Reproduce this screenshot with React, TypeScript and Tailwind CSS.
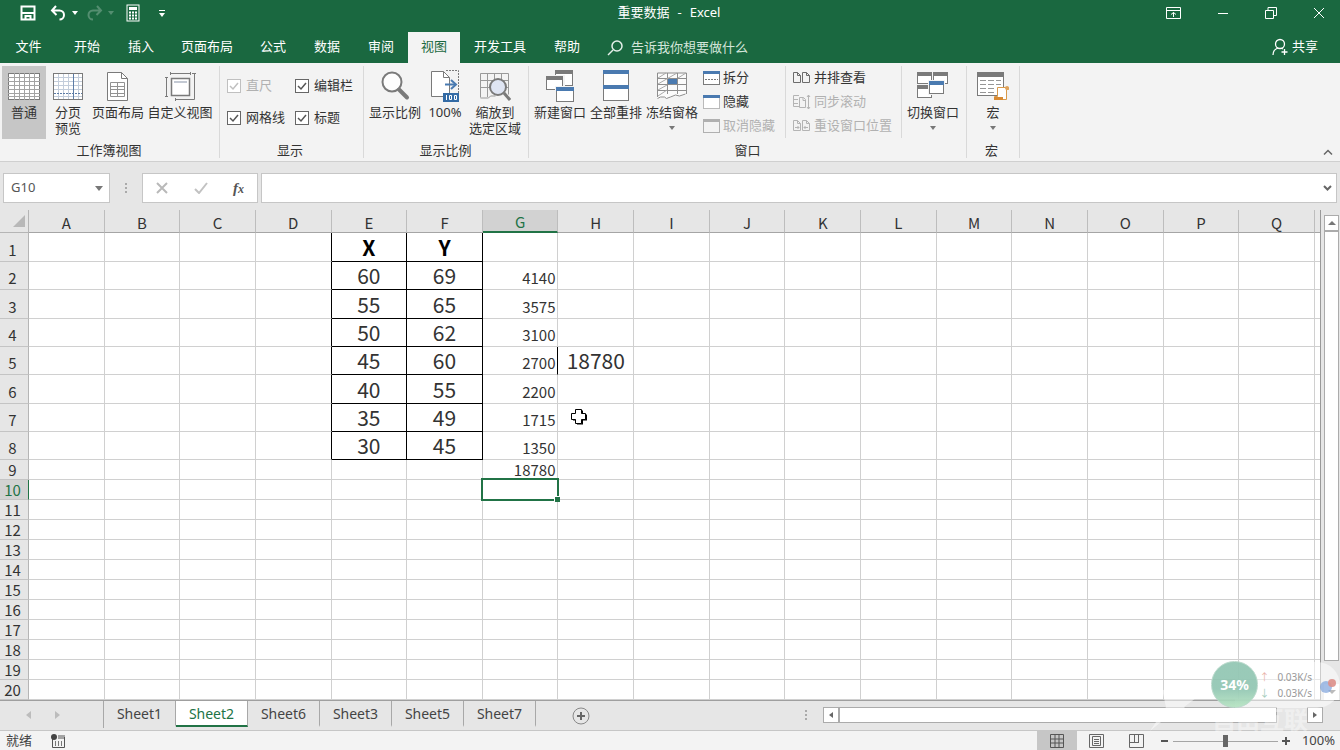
import React from "react";
import clsx from "clsx";

type Cell = { text: string; className: string };

const columns = "ABCDEFGHIJKLMNOPQ".split("");

const rowHeights = [
  "h-[29px]", "h-[28px]", "h-[29px]", "h-[28px]", "h-[28px]",
  "h-[29px]", "h-[28px]", "h-[28px]",
];

const xs = ["X", "60", "55", "50", "45", "40", "35", "30"];
const ys = ["Y", "69", "65", "62", "60", "55", "49", "45"];
const products = ["", "4140", "3575", "3100", "2700", "2200", "1715", "1350", "18780"];

const ribbonTabs = [
  { label: "开始", width: "w-[54px]" },
  { label: "插入", width: "w-[54px]" },
  { label: "页面布局", width: "w-[78px]" },
  { label: "公式", width: "w-[54px]" },
  { label: "数据", width: "w-[54px]" },
  { label: "审阅", width: "w-[54px]" },
  { label: "视图", width: "w-[52px]", active: true },
  { label: "开发工具", width: "w-[80px]" },
  { label: "帮助", width: "w-[54px]" },
];

const sheets = ["Sheet1", "Sheet2", "Sheet6", "Sheet3", "Sheet5", "Sheet7"];

const BLUE = "#4a7ab0";
const GRAY = "#7a7a7a";

/* ---------- Icons ---------- */

const Svg = ({ w, h, children }: { w: number; h: number; children: React.ReactNode }) => (
  <svg width={w} height={h} viewBox={`0 0 ${w} ${h}`} fill="none" className="shrink-0" aria-hidden="true">
    {children}
  </svg>
);

const NormalIcon = () => (
  <Svg w={32} h={32}>
    <rect x="0.5" y="3.5" width="31" height="26" fill="#fff" stroke={GRAY} />
    <path d="M6.5 3v27M11.5 3v27M16.5 3v27M21.5 3v27M26.5 3v27M0 7.5h32M0 11.5h32M0 15.5h32M0 19.5h32M0 23.5h32M0 26.5h32" stroke="#a3a3a3" />
  </Svg>
);

const PageBreakIcon = () => (
  <Svg w={30} h={32}>
    <rect x="0.5" y="3.5" width="29" height="26" fill="#fff" stroke={GRAY} />
    <path d="M5.5 4v25M10.5 4v25M15.5 4v25M25.5 4v25M1 7.5h28M1 11.5h28M1 15.5h28M1 19.5h28M1 26.5h28" stroke="#c3cddb" />
    <path d="M20.5 4v25" stroke="#5c7ca6" />
    <path d="M1 23.5h28" stroke="#5c7ca6" strokeDasharray="2 1" />
  </Svg>
);

const PageLayoutIcon = () => (
  <Svg w={24} h={32}>
    <path d="M1.5 2.5h14l6 6v22h-20z" fill="#fff" stroke={GRAY} />
    <path d="M15.5 2.5v6h6" stroke={GRAY} />
    <path d="M4.500 12.500h14v14h-14zM4 16.500h15M4 19.500h15M4 23.500h15M11.500 12v15" stroke="#929292" />
  </Svg>
);

const CustomViewIcon = () => (
  <Svg w={32} h={32}>
    <path d="M2.500 8v18M1 7.500h3M1 26.500h3M7 3.500h19M6.500 2v3M26.500 2v3" stroke={GRAY} />
    <path d="M28 3.500h2.500v26h-19M11.500 28v3M29 3.500h3" stroke={GRAY} />
    <rect x="7.500" y="8.500" width="18" height="17" fill="#fff" stroke={GRAY} strokeWidth="1.500" />
    <path d="M10 12h13" stroke="#c3c9d3" strokeWidth="2" />
  </Svg>
);

const MagnifierIcon = () => (
  <Svg w={32} h={32}>
    <circle cx="13" cy="12" r="9.500" fill="#fdfdfd" stroke={GRAY} strokeWidth="2" />
    <path d="M20 19.500l8 8" stroke={GRAY} strokeWidth="4" strokeLinecap="round" />
  </Svg>
);

const HundredIcon = () => (
  <Svg w={30} h={34}>
    <path d="M1.500 2.500h12l6 6v19h-18z" fill="#fff" stroke={GRAY} />
    <path d="M13.500 2.500v6h6" stroke={GRAY} />
    <path d="M16 1.500h12.500V25" stroke={GRAY} strokeDasharray="2 1" />
    <path d="M15 15.500h10" stroke={BLUE} strokeWidth="2" />
    <path d="M21 11l5 4.500-5 4.500" stroke={BLUE} strokeWidth="2" />
    <rect x="13" y="24" width="16" height="9" fill="#336ba5" />
    <path d="M16.500 26v5M19.500 26.500h2v4h-2zM24.500 26.500h2v4h-2z" stroke="#fff" />
  </Svg>
);

const ZoomSelectionIcon = () => (
  <Svg w={32} h={32}>
    <path d="M1.500 27.500v-24h28v21M1 10.500h28M1 17.500h28M8.500 3v24M15.500 3v6M22.500 3v6M1.500 28h8l2 -2h5" stroke="#999" />
    <circle cx="19" cy="17" r="8" fill="#dfe5f3" stroke={GRAY} strokeWidth="2" />
    <path d="M25 23l6 7" stroke={GRAY} strokeWidth="3" />
  </Svg>
);

const Win = ({ x, y, w, h, c }: { x: number; y: number; w: number; h: number; c: string }) => (
  <g>
    <rect x={x + 0.5} y={y + 0.5} width={w - 1} height={h - 1} fill="#fff" stroke={GRAY} />
    <rect x={x} y={y} width={w} height={4} fill={c} />
  </g>
);

const NewWindowIcon = () => (
  <Svg w={30} h={34}>
    <Win x={10} y={1} w={18} h={16} c={GRAY} />
    <path d="M0 6h20v16H0z" fill="#f3f3f3" />
    <Win x={1} y={7} w={17} h={14} c={GRAY} />
    <path d="M10 17h20v16H10z" fill="#f3f3f3" />
    <Win x={11} y={18} w={18} h={15} c={BLUE} />
  </Svg>
);

const ArrangeAllIcon = () => (
  <Svg w={26} h={32}>
    <Win x={0} y={0} w={26} h={16} c={BLUE} />
    <Win x={0} y={15} w={26} h={16} c={BLUE} />
  </Svg>
);

const FreezeIcon = () => (
  <Svg w={30} h={32}>
    <path d="M.500 3.500h29v21l-6 2-4-1-5 2-4 1.500-2-1.500H4L.500 29z" fill="#fbfbfb" />
    <path d="M0.500 27v-24h29v21M0 8.500h29M0 14.500h29M0 20.500h29M10.500 3v21M20.500 3v21M0.500 28.500l3-1.500h4l2 1.500 4-1.500 5-2 4 1 6-2" stroke="#8d8d8d" />
    <path d="M1 8l8-5M1 14l19-11M1 20l9-5M1 26l9-6M21 8l8-5" stroke="#a9a9a9" />
    <rect x="11" y="9" width="9" height="5" fill={BLUE} />
  </Svg>
);

const SwitchWindowIcon = () => (
  <Svg w={32} h={32}>
    <Win x={0} y={2} w={15} h={12} c={GRAY} />
    <Win x={16} y={2} w={15} h={12} c={GRAY} />
    <Win x={0} y={15} w={15} h={13} c={GRAY} />
    <path d="M11 10h17v15H11z" fill="#f3f3f3" />
    <Win x={12} y={11} w={15} h={13} c={BLUE} />
  </Svg>
);

const MacroIcon = () => (
  <Svg w={34} h={32}>
    <rect x="1.500" y="2.500" width="26" height="23" fill="#fff" stroke={GRAY} />
    <path d="M1 2h27v5H1z" fill={GRAY} />
    <path d="M4 10.500h6M12 10.500h6M20 10.500h5M4 14.500h6M12 14.500h6M20 14.500h5M4 18.500h6M12 18.500h6M4 22.500h6M12 22.500h6" stroke="#969696" />
    <path d="M21.500 17.500h11v2h-2v10h-12v-3h3z" fill="#fff" stroke="#d99a4b" />
    <path d="M18 27h9v3h-9z" fill="#d88a33" />
    <circle cx="31" cy="18" r="2" fill="#e0a35c" />
  </Svg>
);

const SmallWindowIcon = ({ kind }: { kind: "split" | "hide" | "unhide" }) => (
  <Svg w={17} h={16}>
    <rect x="0.500" y="1.500" width="16" height="13" fill={kind === "unhide" ? "#f3f3f3" : "#fff"} stroke={kind === "unhide" ? "#b0b0b0" : GRAY} strokeDasharray={kind === "hide" ? "1 1" : undefined} />
    <path d="M0 1h17v3H0z" fill={kind === "unhide" ? "#b0b0b0" : BLUE} />
    {kind === "split" && <path d="M2 9.500h13" stroke={GRAY} strokeDasharray="2 1" />}
  </Svg>
);

const SideBySideIcon = ({ kind }: { kind: "view" | "sync" | "reset" }) => {
  const c = kind === "view" ? "#6c6c6c" : "#b4b4b4";
  return (
    <Svg w={18} h={16}>
      {kind === "sync" ? (
        <path d="M6 1.500H.500v11H6M1 5.500h4M1 9.500h4M6.500 3.500h4l2 2v8h-6zM10 3.500v3h3M15.500 1v14M14 3l1.500-2 1.500 2M14 13l1.500 2 1.500-2" stroke={c} />
      ) : (
        <path d="M.500 2.500h4l3 3v7h-7zM4.500 2.500v3h3M9.500 2.500h4l3 3v7h-7zM13.500 2.500v3h3" stroke={c} />
      )}
      {kind === "reset" && <path d="M2 9.500h4M4.500 8l1.500 1.500L4.500 11M11 9.500h4M12.500 8L11 9.500l1.500 1.500" stroke={c} />}
    </Svg>
  );
};

const Caret = ({ className = "border-t-[#777]" }: { className?: string }) => (
  <span className={clsx("block h-0 w-0 border-x-[3px] border-t-[4px] border-x-transparent", className)} />
);

/* ---------- Ribbon pieces ---------- */

type BigButtonProps = {
  icon: React.ReactNode;
  lines: string[];
  width: string;
  active?: boolean;
  menu?: boolean;
};

const BigButton = ({ icon, lines, width, active, menu }: BigButtonProps) => (
  <button className={clsx("flex h-[73px] shrink-0 flex-col items-center pt-[2px] whitespace-nowrap", width, active && "bg-[#c6c6c6]")}>
    <span className="flex h-[36px] items-center justify-center">{icon}</span>
    {lines.map((line) => (
      <span key={line} className="leading-4">{line}</span>
    ))}
    {menu && <span className="flex h-4 items-center"><Caret /></span>}
  </button>
);

const Group = ({ title, className, children }: { title: string; className: string; children: React.ReactNode }) => (
  <section aria-label={title} className={clsx("flex shrink-0 flex-col border-r border-[#d9d9d9]", className)}>
    <div className="flex h-[77px]">{children}</div>
    <div className="pr-[3px] text-center leading-4">{title}</div>
  </section>
);

const Check = ({ label, disabled }: { label: string; disabled?: boolean }) => (
  <label className={clsx("flex h-8 items-center gap-[5px] whitespace-nowrap", disabled && "text-[#b1b1b1]")}>
    <span className="grid">
      <input
        type="checkbox"
        defaultChecked
        disabled={disabled}
        className={clsx("col-start-1 row-start-1 h-[14px] w-[14px] appearance-none border bg-white", disabled ? "border-[#c0c0c0]" : "border-[#666]")}
      />
      <svg viewBox="0 0 14 14" fill="none" className="pointer-events-none col-start-1 row-start-1 h-[14px] w-[14px]">
        <path d="M3 7l3 3 5-6" stroke={disabled ? "#c0c0c0" : "#555"} strokeWidth="1.5" />
      </svg>
    </span>
    {label}
  </label>
);

const ListButton = ({ icon, label, disabled }: { icon: React.ReactNode; label: string; disabled?: boolean }) => (
  <button disabled={disabled} className={clsx("flex h-6 items-center gap-[3px] whitespace-nowrap", disabled && "text-[#b1b1b1]")}>
    {icon}
    {label}
  </button>
);

const TitleBar = () => (
  <header className="bg-[#1a6840] text-[13px] text-white">
    <div className="grid h-[26px] grid-cols-3 items-center">
      <div className="flex items-center pl-5">
        <button aria-label="保存">
          <Svg w={16} h={16}>
            <path d="M1.500 1.500h13v13h-13z" stroke="#fff" strokeWidth="2" />
            <path d="M2 8h12" stroke="#fff" strokeWidth="2" />
            <path d="M5.500 14v-3h5v3" stroke="#fff" strokeWidth="2" />
          </Svg>
        </button>
        <button aria-label="撤消" className="ml-[14px] flex items-center gap-[5px]">
          <Svg w={17} h={16}>
            <path d="M6 1L2 5.500 6.500 10M2.500 5.500h7a4.500 4.500 0 0 1 0 9" stroke="#fff" strokeWidth="2" />
          </Svg>
          <Caret className="border-t-white" />
        </button>
        <button aria-label="恢复" className="ml-2 flex items-center gap-[5px] opacity-25">
          <Svg w={17} h={16}>
            <path d="M11 1l4 4.500-4.500 4.500M15 5.500H7a4.500 4.500 0 0 0 0 9" stroke="#fff" strokeWidth="2" />
          </Svg>
          <Caret className="border-t-white" />
        </button>
        <button aria-label="计算器" className="ml-[12px]">
          <Svg w={14} h={18}>
            <rect x="1" y="1" width="12" height="16" stroke="#fff" />
            <path d="M3 4.500h8" stroke="#fff" strokeWidth="3" />
            <path d="M3 8.500h8M3 11.500h8M3 14.500h8" stroke="#fff" strokeWidth="2" strokeDasharray="2 1" />
          </Svg>
        </button>
        <button aria-label="自定义快速访问工具栏" className="ml-[19px] flex flex-col items-center gap-[2px]">
          <span className="block h-px w-[6px] bg-white" />
          <Caret className="border-t-white" />
        </button>
      </div>
      <h1 className="flex justify-center gap-2 pr-[2px]">
        <span>重要数据</span>
        <span>-</span>
        <span>Excel</span>
      </h1>
      <div className="flex items-center justify-end gap-[36px] pr-[15px]">
        <button aria-label="功能区显示选项">
          <Svg w={15} h={12}>
            <path d="M.500.500h14v11H.500zM0 3.500h15M7.500 10V5.500M5 7.500l2.500-2 2.500 2" stroke="#fff" />
          </Svg>
        </button>
        <button aria-label="最小化">
          <Svg w={12} h={12}><path d="M1 6.500h10" stroke="#fff" /></Svg>
        </button>
        <button aria-label="还原">
          <Svg w={12} h={12}>
            <path d="M.500 3.500h8v8h-8zM3 3V.500h8.500v8H9" stroke="#fff" />
          </Svg>
        </button>
        <button aria-label="关闭">
          <Svg w={12} h={12}><path d="M1 1l10 10M11 1L1 11" stroke="#fff" /></Svg>
        </button>
      </div>
    </div>
    <div className="flex h-[37px] items-end">
      <nav className="flex">
        <button className="h-[31px] w-[60px] pr-[3px] pb-[2px]">文件</button>
        {ribbonTabs.map((tab) => (
          <button key={tab.label} className={clsx("h-[31px] pb-[2px] whitespace-nowrap", tab.width, tab.active && "bg-[#f3f3f3] text-[#1a6840]")}>
            {tab.label}
          </button>
        ))}
      </nav>
      <label className="ml-[13px] flex h-[31px] items-center gap-2">
        <Svg w={16} h={16}>
          <circle cx="10" cy="6" r="5" stroke="#e5f0ea" strokeWidth="1.5" />
          <path d="M6 10l-5 5" stroke="#e5f0ea" strokeWidth="1.5" />
        </Svg>
        <input placeholder="告诉我你想要做什么" className="w-44 bg-transparent outline-none placeholder:text-[#d3e5da]" />
      </label>
      <button className="mr-[22px] ml-auto flex h-[31px] items-center gap-1 pb-[2px]">
        <Svg w={16} h={18}>
          <circle cx="8" cy="6" r="4.500" stroke="#fff" strokeWidth="1.3" />
          <path d="M1 17c0-4 2-6 5-7M10 10.500l1 .500M12.500 11v6M9.500 14h6" stroke="#fff" strokeWidth="1.3" />
        </Svg>
        共享
      </button>
    </div>
  </header>
);

const Ribbon = () => (
  <div className="flex h-[99px] border-b border-[#cfcfcf] bg-[#f3f3f3] pt-[3px] pb-[3px] text-[13px] text-[#333]">
    <Group title="工作簿视图" className="w-[220px] pl-[2px]">
      <BigButton icon={<NormalIcon />} lines={["普通"]} width="w-[44px]" active />
      <BigButton icon={<PageBreakIcon />} lines={["分页", "预览"]} width="w-[44px]" />
      <BigButton icon={<PageLayoutIcon />} lines={["页面布局"]} width="w-[56px]" />
      <BigButton icon={<CustomViewIcon />} lines={["自定义视图"]} width="w-[68px]" />
    </Group>
    <Group title="显示" className="w-[144px]">
      <div className="grid grid-cols-[68px_68px] content-start pt-[4px] pl-[7px]">
        <Check label="直尺" disabled />
        <Check label="编辑栏" />
        <Check label="网格线" />
        <Check label="标题" />
      </div>
    </Group>
    <Group title="显示比例" className="w-[165px] pl-[2px]">
      <BigButton icon={<MagnifierIcon />} lines={["显示比例"]} width="w-[58px]" />
      <BigButton icon={<HundredIcon />} lines={["100%"]} width="w-[42px]" />
      <BigButton icon={<ZoomSelectionIcon />} lines={["缩放到", "选定区域"]} width="w-[58px]" />
    </Group>
    <Group title="窗口" className="w-[438px] pl-[3px]">
      <BigButton icon={<NewWindowIcon />} lines={["新建窗口"]} width="w-[56px]" />
      <BigButton icon={<ArrangeAllIcon />} lines={["全部重排"]} width="w-[56px]" />
      <BigButton icon={<FreezeIcon />} lines={["冻结窗格"]} width="w-[56px]" menu />
      <div className="mb-1 ml-[3px] flex w-[83px] flex-col border-r border-[#d9d9d9]">
        <ListButton icon={<SmallWindowIcon kind="split" />} label="拆分" />
        <ListButton icon={<SmallWindowIcon kind="hide" />} label="隐藏" />
        <ListButton icon={<SmallWindowIcon kind="unhide" />} label="取消隐藏" disabled />
      </div>
      <div className="mb-1 flex w-[116px] flex-col border-r border-[#d9d9d9] pl-[7px]">
        <ListButton icon={<SideBySideIcon kind="view" />} label="并排查看" />
        <ListButton icon={<SideBySideIcon kind="sync" />} label="同步滚动" disabled />
        <ListButton icon={<SideBySideIcon kind="reset" />} label="重设窗口位置" disabled />
      </div>
      <BigButton icon={<SwitchWindowIcon />} lines={["切换窗口"]} width="w-[62px]" menu />
    </Group>
    <Group title="宏" className="w-[53px]">
      <BigButton icon={<MacroIcon />} lines={["宏"]} width="w-[52px]" menu />
    </Group>
    <button aria-label="折叠功能区" className="mr-[7px] ml-auto self-end pb-[2px]">
      <Svg w={10} h={8}><path d="M1 6.500l4-4 4 4" stroke="#666" strokeWidth="1.5" /></Svg>
    </button>
  </div>
);

const FormulaBar = () => (
  <div className="flex pt-[11px] pr-[3px] pb-[7px] pl-[3px] text-[13px] text-[#555]">
    <div className="flex h-[30px] w-[107px] items-center border border-[#c6c6c6] bg-white pr-[6px] pl-[7px]">
      <input aria-label="名称框" defaultValue="G10" className="w-full min-w-0 bg-transparent outline-none" />
      <button aria-label="名称列表"><span className="block h-0 w-0 border-x-4 border-t-[5px] border-x-transparent border-t-[#777]" /></button>
    </div>
    <div className="flex w-8 items-center justify-center">
      <Svg w={2} h={12}><path d="M1 1v10" stroke="#aaa" strokeWidth="2" strokeDasharray="2 2" /></Svg>
    </div>
    <div className="flex h-[30px] w-[116px] items-center justify-between border border-[#c6c6c6] bg-white pr-[13px] pl-[13px]">
      <button aria-label="取消"><Svg w={12} h={12}><path d="M1 1l10 10M11 1L1 11" stroke="#b9b9b9" strokeWidth="2" /></Svg></button>
      <button aria-label="输入"><Svg w={14} h={12}><path d="M1 7l4 4 8-10" stroke="#c2c2c2" strokeWidth="2" /></Svg></button>
      <button aria-label="插入函数" className="font-['Liberation_Serif',serif] text-[15px] font-bold italic">f<span className="text-[12px]">x</span></button>
    </div>
    <div className="ml-[3px] flex h-[30px] flex-1 items-center border border-[#c6c6c6] bg-white pr-1 pl-2">
      <input aria-label="编辑栏" className="min-w-0 flex-1 outline-none" />
      <button aria-label="展开编辑栏"><Svg w={9} h={8}><path d="M1 2l3.500 3.500L8 2" stroke="#666" strokeWidth="2" /></Svg></button>
    </div>
  </div>
);

/* ---------- Sheet ---------- */

const getCell = (col: string, row: number): Cell => {
  const inTable = row <= 8;
  if (col === "E" && inTable) return { text: xs[row - 1], className: "text-center text-[21px]" };
  if (col === "F" && inTable) return { text: ys[row - 1], className: "text-center text-[21px]" };
  if (col === "G" && row <= 9) {
    return { text: products[row - 1], className: clsx("pr-[2px] text-right align-bottom text-[15px]", inTable && "pb-[2px]") };
  }
  if (col === "H" && row === 5) return { text: "18780", className: "text-center text-[21px]" };
  return { text: "", className: "" };
};

const Grid = () => (
  <table className="w-full table-fixed border-separate border-spacing-0 bg-white font-['Noto_Sans_CJK_SC',sans-serif] text-[#333]">
    <colgroup>
      <col className="w-[29px]" />
      {columns.map((c) => <col key={c} />)}
      <col className="w-[5px]" />
    </colgroup>
    <thead>
      <tr className="h-[23px] bg-[#e6e6e6] text-[15px] leading-[19px]">
        <th className="border-r border-b border-[#b5b5b5] p-0">
          <span className="mr-[3px] ml-auto block h-0 w-0 border-b-[12px] border-l-[12px] border-b-[#b8b8b8] border-l-transparent" />
        </th>
        {columns.map((c) => (
          <th
            key={c}
            scope="col"
            className={clsx(
              "border-r border-r-[#bdbdbd] p-0 pt-[2px] font-normal",
              c === "G" ? "border-b-2 border-b-[#217346] bg-[#d2d2d2] text-[#217346]" : "border-b border-b-[#a5a5a5]"
            )}
          >
            {c}
          </th>
        ))}
        <th className="border-b border-[#a5a5a5] p-0" />
      </tr>
    </thead>
    <tbody>
      {Array.from({ length: 20 }, (_, i) => i + 1).map((row) => (
        <tr key={row} className={rowHeights[row - 1] ?? "h-[20px]"}>
          <th
            scope="row"
            className={clsx(
              "border-r border-b border-b-[#c4c4c4] p-0 pr-[3px] text-center align-bottom text-[15px] leading-[19px] font-normal",
              row <= 8 && "pb-[2px]",
              row === 10 ? "border-r-[#217346] bg-[#d2d2d2] text-[#217346]" : "border-r-[#b5b5b5] bg-[#e6e6e6]"
            )}
          >
            {row}
          </th>
          {columns.map((col) => {
            const cell = getCell(col, row);
            const data = row <= 8 && (col === "E" || col === "F");
            const blackRight = data || (row <= 8 && col === "D") || (row === 5 && col === "G");
            return (
              <td
                key={col}
                className={clsx(
                  "relative border-r border-b p-0 leading-[19px]",
                  blackRight ? "border-r-black" : "border-r-[#d0d0d0]",
                  data ? "border-b-black" : "border-b-[#d0d0d0]",
                  row === 1 && "font-bold text-black",
                  cell.className
                )}
              >
                {cell.text}
                {col === "G" && row === 10 && (
                  <span className="absolute -top-[2px] -right-[2px] -bottom-[2px] -left-[2px] z-10 border-2 border-[#217346]">
                    <span className="absolute -right-[3px] -bottom-[3px] h-[6px] w-[6px] border-t border-l border-white bg-[#217346]" />
                  </span>
                )}
                {col === "H" && row === 7 && (
                  <span className="absolute top-[4px] left-[12px]">
                    <Svg w={18} h={18}>
                      <path d="M7 2.500h6v4h4v6h-4v4H7v-4H3v-6h4z" fill="#000" />
                      <path d="M5.500 1.500h6v4h4v6h-4v4h-6v-4h-4v-6h4z" fill="#fff" stroke="#000" />
                    </Svg>
                  </span>
                )}
              </td>
            );
          })}
          <td className="border-b border-[#d0d0d0] p-0" />
        </tr>
      ))}
    </tbody>
  </table>
);

const VerticalScroll = () => (
  <div className="flex w-5 flex-col border-l border-[#999] pt-[5px] pr-px pl-[3px]">
    <button aria-label="向上滚动" className="flex h-4 items-center justify-center border border-[#ababab] bg-white">
      <span className="block h-0 w-0 border-x-4 border-b-4 border-x-transparent border-b-[#777]" />
    </button>
    <div className="flex-1 border border-[#ababab] bg-white" />
    <div className="h-[23px]" />
    <button aria-label="向下滚动" className="flex h-4 items-center justify-center bg-white">
      <span className="block h-0 w-0 border-x-4 border-t-4 border-x-transparent border-t-[#777]" />
    </button>
  </div>
);

const SheetBar = () => (
  <div className="flex h-[30px] items-start border-t border-[#9f9f9f] text-[14px] text-[#444]">
    <div className="flex h-[27px] w-[104px] items-center gap-6 border-r border-[#a8a8a8] pl-[26px]">
      <button aria-label="上一个工作表"><span className="block h-0 w-0 border-y-[4px] border-r-[5px] border-y-transparent border-r-[#bcbcbc]" /></button>
      <button aria-label="下一个工作表"><span className="block h-0 w-0 border-y-[4px] border-l-[5px] border-y-transparent border-l-[#bcbcbc]" /></button>
    </div>
    {sheets.map((sheet) => (
      <button
        key={sheet}
        className={clsx(
          "h-[26px] w-[72px] border-r border-b-2 border-r-[#a8a8a8]",
          sheet === "Sheet2" ? "border-b-[#217346] bg-white text-[#217346]" : "border-b-transparent"
        )}
      >
        {sheet}
      </button>
    ))}
    <button aria-label="新工作表" className="ml-9 self-center">
      <Svg w={18} h={18}>
        <circle cx="9" cy="9" r="8" stroke="#888" />
        <path d="M9 5v8M5 9h8" stroke="#666" strokeWidth="2" />
      </Svg>
    </button>
    <div className="ml-auto flex h-[28px] items-center pr-[17px]">
      <Svg w={2} h={12}><path d="M1 1v10" stroke="#aaa" strokeWidth="2" strokeDasharray="2 2" /></Svg>
      <button aria-label="向左滚动" className="ml-4 flex h-4 w-4 items-center justify-center border border-[#ababab] bg-white">
        <span className="block h-0 w-0 border-y-[3px] border-r-4 border-y-transparent border-r-[#666]" />
      </button>
      <div className="h-4 w-[438px] border border-[#ababab] bg-white" />
      <div className="w-[30px]" />
      <button aria-label="向右滚动" className="flex h-4 w-4 items-center justify-center border border-[#ababab] bg-white">
        <span className="block h-0 w-0 border-y-[3px] border-l-4 border-y-transparent border-l-[#666]" />
      </button>
    </div>
  </div>
);

const StatusBar = () => (
  <footer className="flex h-[21px] items-center border-t border-[#c6c6c6] bg-[#f3f3f3] text-[13px] text-[#444]">
    <span className="pl-[6px]">就绪</span>
    <button aria-label="录制宏" className="ml-[19px]">
      <Svg w={15} h={14}>
        <path d="M1.500 5v8.500h12V3M7 2h7M7 4h7" stroke="#555" />
        <circle cx="3" cy="3" r="3" fill="#444" />
        <path d="M4.500 7v5M7.500 7v5M10.500 7v5" stroke="#777" />
      </Svg>
    </button>
    <div className="ml-auto flex h-full items-center">
      <button aria-label="普通" className="flex h-full w-10 items-center justify-center bg-[#c6c6c6]">
        <Svg w={14} h={14}><path d="M.500.500h13v13H.500zM5 0v14M9 0v14M0 5h14M0 9h14" stroke="#555" /></Svg>
      </button>
      <button aria-label="页面布局" className="flex h-full w-10 items-center justify-center">
        <Svg w={15} h={14}><path d="M.500.500h14v13H.500zM3.500 2.500h8v9h-8zM5 5.500h5M5 7.500h5M5 9.500h5" stroke="#666" /></Svg>
      </button>
      <button aria-label="分页预览" className="flex h-full w-10 items-center justify-center">
        <Svg w={15} h={14}><path d="M.500.500h14v13H.500zM5.500 1v7M9.500 1v7.500M1 8.500h9" stroke="#666" /></Svg>
      </button>
      <button aria-label="缩小" className="ml-1 flex h-full w-3 items-center"><span className="h-[2px] w-[7px] bg-[#555]" /></button>
      <input
        type="range"
        aria-label="显示比例"
        defaultValue={50}
        className="h-3 w-[105px] appearance-none bg-transparent [&::-webkit-slider-runnable-track]:h-px [&::-webkit-slider-runnable-track]:bg-[#a5a5a5] [&::-webkit-slider-thumb]:-mt-[6px] [&::-webkit-slider-thumb]:h-3 [&::-webkit-slider-thumb]:w-[5px] [&::-webkit-slider-thumb]:appearance-none [&::-webkit-slider-thumb]:bg-[#666]"
      />
      <button aria-label="放大" className="mr-3 ml-1">
        <Svg w={8} h={8}><path d="M4 0v8M0 4h8" stroke="#555" strokeWidth="2" /></Svg>
      </button>
      <span className="pr-[5px]">100%</span>
    </div>
  </footer>
);

// floating network meter and the faded watermark that sit over the bottom right corner
const Overlays = () => (
  <div className="pointer-events-none absolute right-0 bottom-0 z-20 h-[92px] w-[192px]">
    <div className="absolute right-0 bottom-[43px] flex h-[46px] w-[105px] items-center justify-end gap-2 rounded-r-full bg-white/50 pr-[28px] text-[10px] leading-4 text-[#999]">
      <div className="text-[#e9b3a9]"><div>↑</div><div className="text-[#a5cdbb]">↓</div></div>
      <div><div>0.03K/s</div><div>0.03K/s</div></div>
    </div>
    <div className="absolute right-[1px] bottom-[57px] h-4 w-5">
      <Svg w={20} h={16}>
        <circle cx="7" cy="9" r="6" fill="#7da2dc" opacity="0.7" />
        <circle cx="13" cy="5" r="4" fill="#dd8f8a" opacity="0.9" />
      </Svg>
    </div>
    <div className="absolute bottom-[43px] left-[63px] flex h-[47px] w-[47px] items-center justify-center rounded-full border border-[#b9d9cb] bg-linear-to-b from-[#8ec4b0]/90 from-60% to-[#b4e4c0]/90 text-[14px] font-bold text-white">
      34%
    </div>
    <svg viewBox="0 0 60 50" className="absolute bottom-[12px] left-0 h-[50px] w-[60px]" fill="#fff" opacity="0.5">
      <path d="M14 0l16 10L60 0 36 18l12 12H32l-8-6L2 42l16-24z" />
    </svg>
    <span className="absolute bottom-[19px] left-[64px] text-[24px] leading-6 font-bold whitespace-nowrap text-white/40">自由互联</span>
  </div>
);

const App = () => {
  return (
    <div className="relative flex min-h-screen flex-col bg-[#e6e6e6] font-['Noto_Sans','Noto_Sans_CJK_SC',sans-serif]">
      <TitleBar />
      <Ribbon />
      <FormulaBar />
      <main className="flex">
        <div className="min-w-0 flex-1">
          <Grid />
        </div>
        <VerticalScroll />
      </main>
      <SheetBar />
      <StatusBar />
      <Overlays />
    </div>
  );
};

export default App;
